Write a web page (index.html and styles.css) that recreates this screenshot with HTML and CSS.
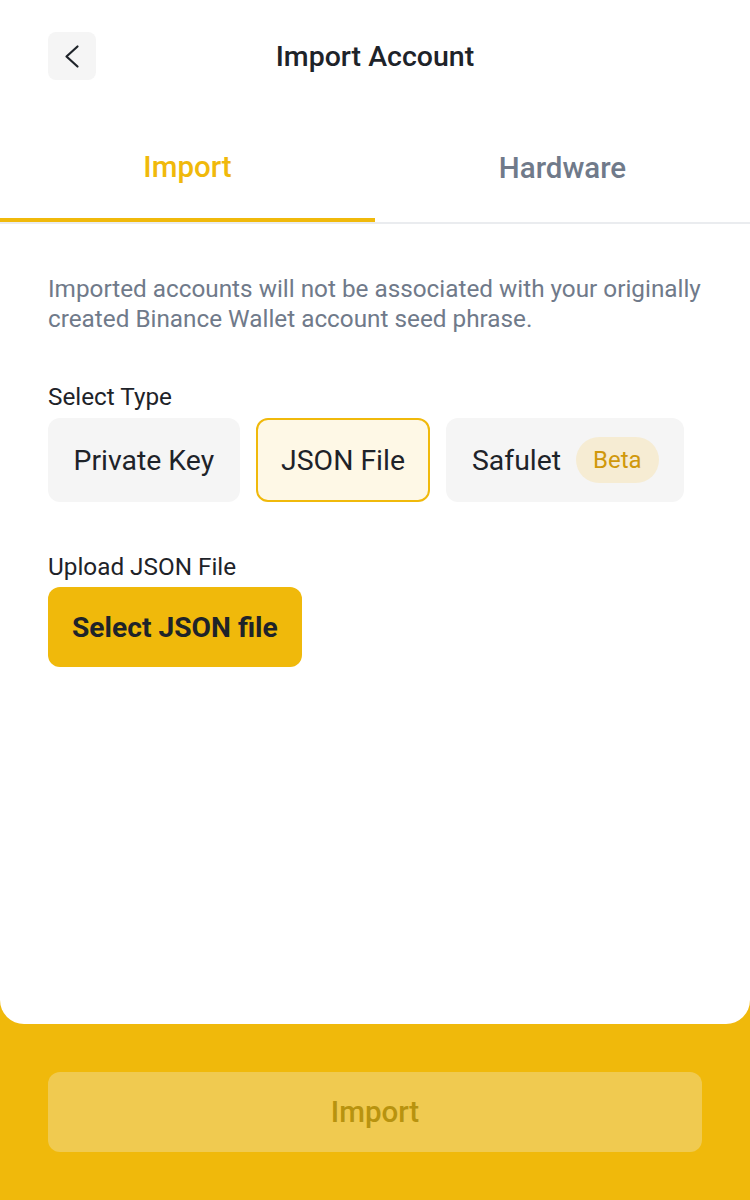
FILE: index.html
```html
<!DOCTYPE html>
<html lang="en">
<head>
<meta charset="utf-8">
<title>Import Account</title>
<link rel="stylesheet" href="styles.css">
</head>
<body>
<div class="card">
  <header class="header">
    <button class="back" aria-label="Back">
      <svg width="48" height="48" viewBox="0 0 48 48"><path d="M29.5 14.5L18.5 24.5l11 10" fill="none" stroke="#1e2329" stroke-width="2.2" stroke-linecap="round" stroke-linejoin="round"/></svg>
    </button>
    <h1 class="title">Import Account</h1>
    <span class="spacer"></span>
  </header>
  <nav class="tabs">
    <div class="tab active">Import</div>
    <div class="tab">Hardware</div>
  </nav>
  <main class="content">
    <p class="desc">Imported accounts will not be associated with your originally created Binance Wallet account seed phrase.</p>
    <div class="label">Select Type</div>
    <div class="types">
      <div class="type">Private Key</div>
      <div class="type selected">JSON File</div>
      <div class="type">Safulet <span class="badge">Beta</span></div>
    </div>
    <div class="label upload-label">Upload JSON File</div>
    <button class="select-btn">Select JSON file</button>
  </main>
</div>
<footer class="footer">
  <button class="import-btn">Import</button>
</footer>
</body>
</html>
```
FILE: styles.css
```css
* { box-sizing: border-box; }
html, body { margin: 0; padding: 0; }
body {
  width: 750px;
  height: 1200px;
  background: #f0b90b;
  font-family: "Roboto", "Liberation Sans", sans-serif;
  color: #1e2329;
  overflow: hidden;
}
.card {
  height: 1024px;
  background: #fff;
  border-radius: 0 0 24px 24px;
}
.header {
  display: flex;
  align-items: center;
  padding: 32px 48px 0;
  height: 80px;
}
.back {
  width: 48px;
  height: 48px;
  border: 0;
  border-radius: 8px;
  background: #f5f5f5;
  display: flex;
  align-items: center;
  justify-content: center;
  padding: 0;
}
.title {
  flex: 1;
  margin: 0;
  text-align: center;
  font-size: 28.5px;
  font-weight: 500;
  color: #1e2329;
}
.spacer { width: 48px; }
.tabs {
  display: flex;
  margin-top: 44px;
  border-bottom: 2px solid #eaecef;
}
.tab {
  flex: 1;
  text-align: center;
  font-size: 29.5px;
  font-weight: 500;
  color: #707a8a;
  height: 98px;
  line-height: 88px;
}
.tab.active {
  color: #f0b90b;
  border-bottom: 4px solid #f0b90b;
  margin-bottom: -2px;
  line-height: 86px;
}
.content { padding: 0 48px; }
.desc {
  margin: 50px 0 0;
  font-size: 24.3px;
  line-height: 30px;
  color: #707a8a;
}
.label {
  margin-top: 48px;
  font-size: 24.3px;
  line-height: 30px;
  color: #1e2329;
}
.types {
  display: flex;
  gap: 16px;
  margin-top: 6px;
}
.type {
  height: 84px;
  display: flex;
  align-items: center;
  padding: 0 23.5px;
  border-radius: 12px;
  background: #f5f5f5;
  font-size: 28.4px;
  color: #1e2329;
  border: 2px solid transparent;
}
.type.selected {
  background: #fef8e6;
  border-color: #f0b90b;
}
.badge {
  margin-left: 15px;
  height: 46px;
  padding: 0 17px;
  border-radius: 23px;
  background: #f6ecd3;
  color: #d0980b;
  font-size: 24px;
  display: flex;
  align-items: center;
}
.upload-label { margin-top: 50px; }
.select-btn {
  margin-top: 5px;
  height: 80px;
  padding: 0 24px;
  border: 0;
  border-radius: 12px;
  background: #f0b90b;
  font-family: inherit;
  font-size: 28.2px;
  font-weight: 700;
  color: #1e2329;
}
.footer { padding: 48px; }
.import-btn {
  width: 100%;
  height: 80px;
  border: 0;
  border-radius: 12px;
  background: #f0ca50;
  font-family: inherit;
  font-size: 29.5px;
  font-weight: 500;
  color: #b8930f;
}
```
